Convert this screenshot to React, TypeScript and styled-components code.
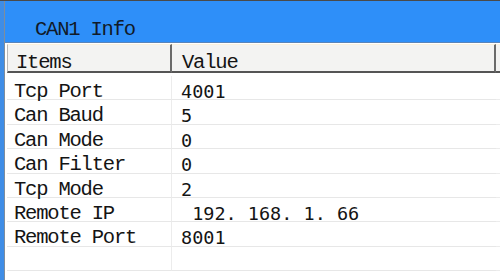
import React from "react";
import styled, { createGlobalStyle } from "styled-components";

const Global = createGlobalStyle`
  html, body { margin: 0; padding: 0; background: #ffffff; }
  #root { width: 500px; height: 280px; overflow: hidden; }
`;

const Window = styled.div`
  width: 500px;
  height: 280px;
  box-sizing: border-box;
  border-top: 1px solid #4a4a4a;
  display: flex;
  background: #ffffff;
  overflow: hidden;
`;

const LeftEdge = styled.div`
  width: 4px;
  background: #3f8de6;
  border-right: 1px solid #7f8d9c;
  flex: none;
`;

const Main = styled.div`
  flex: 1;
  display: flex;
  flex-direction: column;
  min-width: 0;
`;

const TitleBar = styled.div`
  height: 42px;
  box-sizing: border-box;
  background: #2e8ff9;
  border-bottom: 1px solid #5b84b8;
  padding: 19px 0 0 30px;
  font-family: "Liberation Mono", monospace;
  font-size: 20.5px;
  letter-spacing: -1.2px;
  line-height: 20px;
  color: #111a28;
`;

const Body = styled.div`
  flex: 1;
  padding: 1px 0 0 2px;
  background: #ffffff;
`;

const Header = styled.div`
  display: grid;
  grid-template-columns: 165px 324px 1fr;
`;

const HeadCell = styled.div<{ $pad: number; $first?: boolean; $last?: boolean }>`
  height: 29px;
  box-sizing: border-box;
  background: #f3f3f2;
  border-top: 1px solid #fbf1dc;
  border-left: ${(p) => (p.$first ? "1px solid #b8b8b8" : "none")};
  border-right: ${(p) => (p.$last ? "none" : "2px solid #6a6a6a")};
  border-bottom: 2px solid #555555;
  padding: 8px 0 0 ${(p) => p.$pad}px;
  font-family: "Liberation Mono", monospace;
  font-size: 20.5px;
  letter-spacing: -1.2px;
  line-height: 20px;
  color: #141414;
  white-space: nowrap;
  overflow: hidden;
`;

const Rows = styled.div`
  padding-top: 3px;
`;

const Row = styled.div`
  display: grid;
  grid-template-columns: 165px 324px 1fr;
  height: 24.4px;
`;

const LabelCell = styled.div`
  box-sizing: border-box;
  height: 24.4px;
  border-bottom: 1px solid #e7e7e7;
  border-right: 1px solid #ececec;
  padding: 6px 0 0 7px;
  font-family: "Liberation Mono", monospace;
  font-size: 20.5px;
  letter-spacing: -1.2px;
  line-height: 20px;
  color: #141414;
  white-space: pre;
`;

const ValueCell = styled.div`
  box-sizing: border-box;
  height: 24.4px;
  border-bottom: 1px solid #e7e7e7;
  padding: 6px 0 0 9px;
  font-family: "DejaVu Sans Mono", monospace;
  font-size: 18.5px;
  line-height: 20px;
  color: #141414;
  white-space: pre;
`;

const RestCell = styled.div`
  box-sizing: border-box;
  height: 24.4px;
  border-bottom: 1px solid #ececec;
`;

const data: [string, string][] = [
  ["Tcp Port", "4001"],
  ["Can Baud", "5"],
  ["Can Mode", "0"],
  ["Can Filter", "0"],
  ["Tcp Mode", "2"],
  ["Remote IP", " 192. 168. 1. 66"],
  ["Remote Port", "8001"],
  ["", ""],
];

export default function App() {
  return (
    <>
      <Global />
      <Window>
        <LeftEdge />
        <Main>
          <TitleBar>CAN1 Info</TitleBar>
          <Body>
            <Header>
              <HeadCell $pad={8} $first>Items</HeadCell>
              <HeadCell $pad={10}>Value</HeadCell>
              <HeadCell $pad={0} $last />
            </Header>
            <Rows>
              {data.map(([k, v], i) => (
                <Row key={i}>
                  <LabelCell>{k}</LabelCell>
                  <ValueCell>{v}</ValueCell>
                  <RestCell />
                </Row>
              ))}
            </Rows>
          </Body>
        </Main>
      </Window>
    </>
  );
}
